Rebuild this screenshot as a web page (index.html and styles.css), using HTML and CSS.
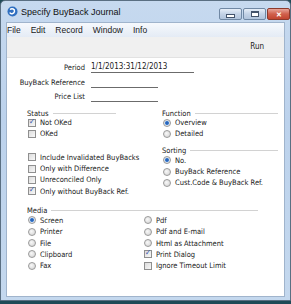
FILE: index.html
```html
<!DOCTYPE html>
<html lang="en">
<head>
  <meta charset="UTF-8">
  <title>Specify BuyBack Journal</title>
  <link rel="stylesheet" href="styles.css">
</head>
<body>
  <div class="window">
    <div class="titlebar">
      <svg class="app-icon" width="11" height="11" viewBox="0 0 11 11">
        <circle cx="5.5" cy="5.5" r="5" fill="#2f6fc0"/>
        <path d="M3 3.5 C 5 2, 8 3, 7.5 5.5 C 7 8, 3.5 8.5, 2.8 6.5" fill="none" stroke="#fff" stroke-width="1.4"/>
      </svg>
      <span class="title">Specify BuyBack Journal</span>
      <div class="caption-btns">
        <div class="cbtn"><span class="min-glyph"></span></div>
        <div class="cbtn"><span class="max-glyph"></span></div>
        <div class="cbtn close">&#x2715;</div>
      </div>
    </div>
    <div class="inner">
      <div class="menubar">
        <span>File</span><span>Edit</span><span>Record</span><span>Window</span><span>Info</span>
      </div>
      <div class="toolbar"><span class="run">Run</span></div>
      <div class="client">
        <div class="fields">
          <label>Period</label><div class="field wide">1/1/2013:31/12/2013</div>
          <label>BuyBack Reference</label><div class="field"></div>
          <label>Price List</label><div class="field"></div>
        </div>

        <div class="columns">
          <div class="col-left">
            <div class="group-head">Status <span class="rule short"></span></div>
            <div class="opt"><span class="check on"></span>Not OKed</div>
            <div class="opt"><span class="check"></span>OKed</div>
            <div class="spacer"></div>
            <div class="opt"><span class="check"></span>Include Invalidated BuyBacks</div>
            <div class="opt"><span class="check"></span>Only with Difference</div>
            <div class="opt"><span class="check"></span>Unreconciled Only</div>
            <div class="opt"><span class="check on"></span>Only without BuyBack Ref.</div>
          </div>
          <div class="col-right">
            <div class="group-head">Function <span class="rule"></span></div>
            <div class="opt"><span class="radio on"></span>Overview</div>
            <div class="opt"><span class="radio"></span>Detailed</div>
            <div class="group-head sorting">Sorting <span class="rule"></span></div>
            <div class="opt"><span class="radio on"></span>No.</div>
            <div class="opt"><span class="radio"></span>BuyBack Reference</div>
            <div class="opt"><span class="radio"></span>Cust.Code &amp; BuyBack Ref.</div>
          </div>
        </div>

        <div class="media">
          <div class="group-head">Media <span class="rule"></span></div>
          <div class="media-grid">
            <div class="opt"><span class="radio on"></span>Screen</div>
            <div class="opt"><span class="radio"></span>Pdf</div>
            <div class="opt"><span class="radio"></span>Printer</div>
            <div class="opt"><span class="radio"></span>Pdf and E-mail</div>
            <div class="opt"><span class="radio"></span>File</div>
            <div class="opt"><span class="radio"></span>Html as Attachment</div>
            <div class="opt"><span class="radio"></span>Clipboard</div>
            <div class="opt"><span class="check on"></span>Print Dialog</div>
            <div class="opt"><span class="radio"></span>Fax</div>
            <div class="opt"><span class="check"></span>Ignore Timeout Limit</div>
          </div>
        </div>
      </div>
    </div>
  </div>
  <div class="desktop"></div>
</body>
</html>
```

FILE: styles.css
```css
body {
    margin: 0;
    font-family: "DejaVu Sans Condensed", "DejaVu Sans", sans-serif;
    font-stretch: condensed;
    font-size: 7.5px;
    color: #1a1a1a;
    background: #1f4a57;
}

.window {
    width: 291px;
    height: 301px;
    box-sizing: border-box;
    border: 1px solid #5a6f82;
    border-radius: 5px 5px 0 0;
    background: linear-gradient(to bottom, #c6d9ef, #bcd2ec 40%, #c4d8ee);
    display: flex;
    flex-direction: column;
    padding: 0 5px 3px 5px;
}

.desktop {
    height: 3px;
}

/* title bar */
.titlebar {
    height: 20px;
    display: flex;
    align-items: center;
    flex-shrink: 0;
    padding-left: 1px;
    font-family: "Liberation Sans", sans-serif;
    font-stretch: normal;
}

.app-icon {
    margin-right: 3px;
    margin-top: 1px;
}

.title {
    font-size: 9px;
    color: #101010;
    margin-top: 1px;
}

.caption-btns {
    margin-left: auto;
    display: flex;
    gap: 1px;
    margin-right: -5px;
    align-self: flex-start;
    margin-top: 7px;
}

.cbtn {
    width: 21px;
    height: 10px;
    border: 1px solid #7088a4;
    border-radius: 2px;
    background: linear-gradient(to bottom, #e6eef8, #c3d2e6 50%, #b1c4dc);
    display: flex;
    align-items: center;
    justify-content: center;
}

.cbtn.close {
    background: linear-gradient(to bottom, #e8a59a, #d0604c 50%, #c24530);
    border-color: #8c3a2c;
    color: #fff;
    font-size: 7px;
    font-weight: bold;
    line-height: 1;
}

.min-glyph {
    width: 7px;
    height: 2px;
    margin-top: 3px;
    background: #fff;
    border: 1px solid #43536b;
}

.max-glyph {
    width: 6px;
    height: 3px;
    border: 1px solid #43536b;
    border-top-width: 2px;
    background: #fff;
}

/* inner area */
.inner {
    flex: 1;
    display: flex;
    flex-direction: column;
    border: 1px solid #a0b4cc;
    background: #fff;
    margin-top: 1px;
}

.menubar {
    height: 14px;
    display: flex;
    align-items: center;
    gap: 10px;
    background: linear-gradient(to bottom, #f6f9fd, #e4ebf5);
    font-family: "Liberation Sans", sans-serif;
    font-stretch: normal;
    font-size: 8.5px;
}

.toolbar {
    height: 20px;
    background: #f0f0f0;
    border-bottom: 1px solid #e2e2e2;
    display: flex;
    align-items: center;
    justify-content: flex-end;
    padding-right: 20px;
    font-size: 8px;
}

.run {
    margin-top: -1px;
}

.client {
    flex: 1;
    background: #fff;
    padding-top: 3px;
    padding-left: 1px;
}

/* header fields */
.fields {
    display: grid;
    grid-template-columns: 77px 120px;
    column-gap: 6px;
    row-gap: 2.5px;
    align-items: end;
}

.fields label {
    text-align: right;
    line-height: 11px;
    white-space: nowrap;
}

.field {
    height: 11px;
    line-height: 11px;
    width: 67px;
    border-bottom: 1px solid #6b6b6b;
    font-size: 8px;
}

.field.wide {
    width: 103px;
}

/* option groups */
.columns {
    display: flex;
    margin-top: 7px;
}

.col-left {
    width: 135px;
    padding-left: 19px;
}

.col-right {
    width: 116px;
}

.group-head {
    display: flex;
    align-items: center;
    height: 8px;
}

.rule {
    flex: 1;
    height: 0;
    border-top: 1px solid #d2d2d2;
    margin-left: 4px;
}

.rule.short {
    flex: none;
    width: 63px;
}

.sorting {
    margin-top: 7px;
}

.opt {
    display: flex;
    align-items: center;
    height: 11.3px;
    padding-left: 1px;
    white-space: nowrap;
}

.spacer {
    height: 12px;
}

.check {
    width: 8px;
    height: 8px;
    box-sizing: border-box;
    border: 1px solid #8f8f8f;
    background: linear-gradient(135deg, #dcdcdc, #f8f8f8);
    margin-right: 4px;
    position: relative;
}

.check.on::after {
    content: "\2713";
    position: absolute;
    left: 0;
    top: -3px;
    font-size: 8px;
    color: #2a55a8;
}

.radio {
    width: 8px;
    height: 8px;
    box-sizing: border-box;
    border: 1px solid #9a9a9a;
    border-radius: 50%;
    background: radial-gradient(circle at 40% 40%, #f8f8f8, #d0d0d0);
    margin-right: 4px;
}

.radio.on {
    background: radial-gradient(circle, #1c4fa5 0, #3f7fd0 1.6px, #e2e8f0 2.4px, #d0d4da);
}

.media {
    margin-top: 10px;
    padding-left: 19px;
    width: 231px;
}

.media-grid {
    display: grid;
    grid-template-columns: 116px 115px;
}
```
